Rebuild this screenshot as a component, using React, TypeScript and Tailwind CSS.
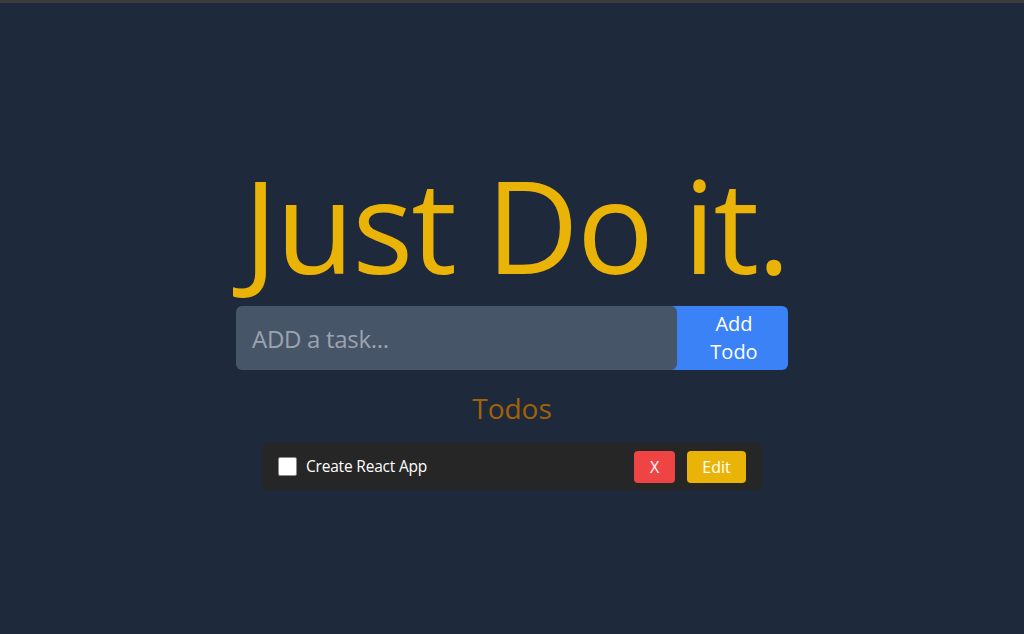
import React from "react";

export default function App() {
  return (
    <div className="min-h-[634px] w-full bg-[#1e293b] flex flex-col" style={{ fontFamily: '"Open Sans", "Noto Sans", sans-serif' }}>
      <div className="h-[3px] w-full bg-[#3c3c3c]" />
      <div className="flex flex-col items-center">
        <h1 className="mt-[158px] text-[128px] leading-none tracking-[-2px] text-[#eab308] whitespace-nowrap pl-[8px]">Just Do it.</h1>
        <div className="mt-[17px] flex w-[552px] h-[64px]">
          <input
            className="relative z-10 flex-1 min-w-0 h-full rounded-md bg-[#475569] px-4 text-2xl tracking-[-0.3px] text-white placeholder:text-[#9ca3af] outline-none"
            placeholder="ADD a task..."
          />
          <button className="w-[116px] -ml-[5px] pl-[8px] h-full rounded-r-md bg-[#3b82f6] text-xl leading-7 text-white">
            Add
            <br />
            Todo
          </button>
        </div>
        <h2 className="mt-[20px] text-[28px] leading-9 text-[#a16207]">Todos</h2>
        <div className="mt-[17px] w-[500px] h-[47px] rounded-md bg-[#262626] flex items-center pl-4 pr-4">
          <span className="w-[19px] h-[19px] rounded-[2px] bg-white border border-[#8a8a8a]" />
          <span className="ml-[9px] text-[15.5px] tracking-[-0.2px] text-white flex-1">Create React App</span>
          <button className="w-[41px] h-[32px] rounded bg-[#ef4444] text-white text-base">X</button>
          <button className="ml-3 w-[59px] h-[32px] rounded bg-[#eab308] text-white text-base">Edit</button>
        </div>
      </div>
    </div>
  );
}
